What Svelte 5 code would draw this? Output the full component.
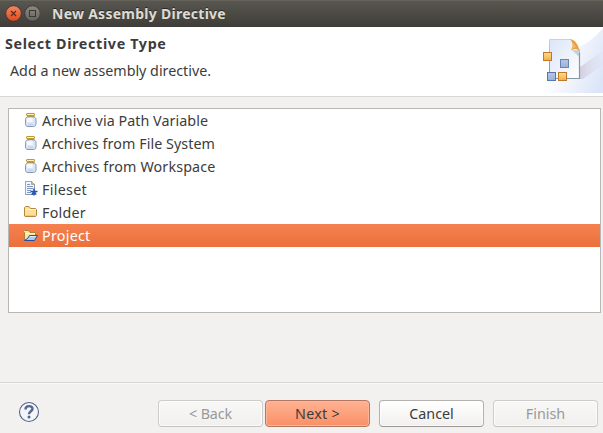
<script>
  const items = [
    { label: 'Archive via Path Variable', icon: 'jar', width: 166 },
    { label: 'Archives from File System', icon: 'jar', width: 173 },
    { label: 'Archives from Workspace', icon: 'jar', width: 173.5 },
    { label: 'Fileset', icon: 'file', width: 45 },
    { label: 'Folder', icon: 'folder', width: 44 },
    { label: 'Project', icon: 'project', width: 48.5 }
  ];
  const buttons = [
    { label: '< Back', kind: 'disabled', width: 43 },
    { label: 'Next >', kind: 'primary', width: 45 },
    { label: 'Cancel', kind: 'normal', width: 44.5 },
    { label: 'Finish', kind: 'disabled', width: 39.5 }
  ];
  let selected = $state(5);

  // Spread the tracking so that a label occupies its intended width.
  function fit(node, width) {
    const natural = node.getBoundingClientRect().width;
    const step = (width - natural) / node.textContent.length;
    node.style.letterSpacing = `${step}px`;
  }
</script>

<div class="dialog">
  <header class="titlebar">
    <svg class="controls" width="40" height="27" viewBox="0 0 40 27">
      <defs>
        <linearGradient id="close" x1="0" y1="0" x2="0" y2="1"><stop offset="0" stop-color="#f58763" /><stop offset="1" stop-color="#df4b1b" /></linearGradient>
        <linearGradient id="max" x1="0" y1="0" x2="0" y2="1"><stop offset="0" stop-color="#8b8982" /><stop offset="1" stop-color="#65635d" /></linearGradient>
      </defs>
      <circle cx="13.5" cy="13.5" r="7.8" fill="url(#close)" stroke="#34322d" stroke-width=".8" />
      <path d="M11 11l5 5M16 11l-5 5" stroke="#5a2a1a" stroke-width="1.1" />
      <circle cx="32.5" cy="13.5" r="7.8" fill="url(#max)" stroke="#34322d" stroke-width=".8" />
      <rect x="29.5" y="10.5" width="6" height="6" fill="none" stroke="#3b3934" />
    </svg>
    <span class="caption"><span use:fit={174}>New Assembly Directive</span></span>
  </header>

  <section class="banner">
    <div class="heading">
      <h1><span use:fit={161.5}>Select Directive Type</span></h1>
      <p><span use:fit={201}>Add a new assembly directive.</span></p>
    </div>
    <svg class="art" width="80" height="66" viewBox="523 27 80 66">
      <defs>
        <linearGradient id="sweep" gradientUnits="userSpaceOnUse" x1="552" y1="62" x2="603" y2="80"><stop offset="0" stop-color="#fff" /><stop offset="0.5" stop-color="#eef2fc" /><stop offset="1" stop-color="#dbe4f8" /></linearGradient>
        <linearGradient id="fade" x1="0" y1="0" x2="1" y2="0"><stop offset="0" stop-color="#c5bfd4" stop-opacity=".75" /><stop offset="1" stop-color="#d8d8eb" stop-opacity=".1" /></linearGradient>
        <linearGradient id="page" x1="0" y1="0" x2="1" y2="1"><stop offset="0" stop-color="#dce6f7" /><stop offset="0.6" stop-color="#f0f4fc" /><stop offset="1" stop-color="#fff" /></linearGradient>
        <linearGradient id="edge" x1="0" y1="0" x2="0" y2="1"><stop offset="0" stop-color="#d8d2bc" /><stop offset="1" stop-color="#6e8a99" /></linearGradient>
        <linearGradient id="gold" x1="0" y1="0" x2="0" y2="1"><stop offset="0" stop-color="#ffdc96" /><stop offset="1" stop-color="#f5ac40" /></linearGradient>
        <linearGradient id="steel" x1="0" y1="0" x2="0" y2="1"><stop offset="0" stop-color="#b7c6e0" /><stop offset="1" stop-color="#9bb1d5" /></linearGradient>
      </defs>
      <path d="M603 28C594 38 588 43 579 47V79H549L536 93H603Z" fill="url(#sweep)" />
      <path d="M580 67L603 51V65L583 79H578Z" fill="url(#fade)" />
      <path d="M549.5 39.5H571L579.5 50V78.5H549.5Z" fill="url(#page)" stroke="url(#edge)" />
      <path d="M550 78.5H579.5V53" fill="none" stroke="#8199a5" stroke-width="1.2" />
      <path d="M572 50L579 50V57Z" fill="#c9cfda" />
      <path d="M570 39C575 40 578 44 579.5 50.5C576 48.5 574 48.5 571 50.5C573.5 46 573 42 570 39Z" fill="#e9a13e" />
      <path d="M573 43L576 47L572.5 48.5Z" fill="#f5bd66" />
      <rect x="543.5" y="52.5" width="8" height="8" fill="url(#gold)" stroke="#bd792c" />
      <rect x="560.5" y="59.5" width="8" height="8" fill="url(#steel)" stroke="#6584b8" />
      <rect x="547.5" y="72.5" width="8" height="8" fill="url(#steel)" stroke="#5576b4" />
      <rect x="558.5" y="72.5" width="8" height="8" fill="url(#gold)" stroke="#bd792c" />
    </svg>
  </section>

  <main>
    <ul>
      {#each items as item, i}
        <li class:selected={i === selected} onclick={() => (selected = i)} role="presentation">
          <svg width="16" height="16" viewBox="0 0 16 16">
            {#if item.icon === 'jar'}
              <path d="M4.5 5C3.2 5.4 2.5 6.2 2.5 7.5V11.8C2.5 13.5 3.3 14.5 5 14.5H10.5C12 14.5 13 13.5 13 11.8V7.500C13 6.200 12.300 5.400 11 5Z" fill="#dce7f6" stroke="#8598b2" />
              <path d="M4 7.5Q4 5.500 6 5.500H9.500V10H4Z" fill="#fff" opacity=".75" />
              <path d="M5 12.500H10.500" stroke="#c3d6ee" stroke-width="2" />
              <rect x="3.500" y="1.500" width="8" height="2" rx=".5" fill="#fff1bd" stroke="#c09a2c" />
              <path d="M4 4.500H11.500" stroke="#b19650" />
            {:else if item.icon === 'file'}
              <path d="M2.500 .5H8.500L11.500 3.500V13.500H2.500Z" fill="#f2f6fc" stroke="#8796ae" />
              <path d="M2.500 13.500V.5H8" fill="none" stroke="#b5a779" />
              <path d="M8.500 .5V3.500H11.500Z" fill="#dfc584" stroke="#9b9476" stroke-width=".7" />
              <path d="M4 3.500H7M4 5.500H10M4 7.500H10M4 9.500H8M4 11.500H8" stroke="#7f97c2" />
              <path d="M11 7.500V14.500M7.500 10.500H14.500M8.800 13.700L11 10.500L13.200 13.700" fill="none" stroke="#2854b0" stroke-width="1.500" />
            {:else if item.icon === 'folder'}
              <path d="M1.500 12V3.500L2.500 2.500H6L7.500 4.500H12.500L13.500 5.500V11.500L12.500 12.500H2Z" fill="#fae09a" stroke="#b88739" />
              <path d="M2.500 5.500H12.500" stroke="#fff6cd" />
              <path d="M2.500 11.500H12.500" stroke="#edc974" />
            {:else}
              <path d="M1.500 13V5.500L.5 4.500L1.500 3.500H5.500L7 5.500H12.500V8" fill="#fbe5a5" stroke="#ae8335" />
              <path d="M2.500 6.500H12" stroke="#fff6cf" />
              <path d="M1.500 13.500L4.500 11.500L6.500 8.500H14.500L11.500 13.500Z" fill="#a9caf1" stroke="#294d99" />
              <path d="M7 9.500H13" stroke="#e0effd" />
            {/if}
          </svg>
          <span use:fit={item.width}>{item.label}</span>
        </li>
      {/each}
    </ul>
  </main>

  <footer>
    <svg class="help" width="22" height="22" viewBox="0 0 22 22">
      <circle cx="11" cy="11" r="9.5" fill="#f4f6fa" stroke="#51658e" stroke-width="1.1" />
      <path d="M7.5 8.4C7.5 4 14.6 4.200 14.500 7.900C14.400 10.200 11 10.300 11 13.200" fill="none" stroke="#536790" stroke-width="2.400" />
      <circle cx="11" cy="16" r="1.500" fill="#536790" />
    </svg>
    <div class="actions">
      {#each buttons as button}
        <button class={button.kind} disabled={button.kind === 'disabled'}><span use:fit={button.width}>{button.label}</span></button>
      {/each}
    </div>
  </footer>
</div>

<style>
  .dialog {
    width: 603px;
    height: 433px;
    display: flex;
    flex-direction: column;
    overflow: hidden;
    box-sizing: border-box;
    background: #f2f1f0;
    color: #3c3c3c;
    font: 14.3px/23px "Noto Sans", "Open Sans", sans-serif;
    white-space: nowrap;
  }
  .titlebar {
    flex: 0 0 27px;
    display: flex;
    background: linear-gradient(#595750, #3e3d39);
    box-shadow: inset 0 1px #65625a;
    color: #dfdbd2;
    font-size: 14px;
    font-weight: 700;
    line-height: 27px;
  }
  .caption { margin-left: 12px; text-shadow: 0 -1px #292824; }
  .banner {
    flex: 0 0 69px;
    display: flex;
    justify-content: space-between;
    background: #fff;
    border-bottom: 1px solid #d9d7d5;
  }
  .heading { padding: 5px 0 0 5px; }
  h1 { margin: 0; font-size: 14.3px; line-height: 24px; }
  p { margin: 3px 0 0 5px; line-height: 24px; }
  main { flex: 0 0 285px; padding: 11px 2px 0 8px; box-sizing: border-box; }
  ul {
    height: 205px;
    box-sizing: border-box;
    margin: 0;
    padding: 0;
    border: 1px solid #b9b7b5;
    background: #fff;
    list-style: none;
  }
  li { display: flex; align-items: center; height: 23px; padding-left: 14px; gap: 3px; }
  li svg { margin-bottom: 1px; }
  .selected { color: #fff; background: linear-gradient(#f58150, #eb703b); }
  footer {
    flex: 1;
    display: flex;
    justify-content: space-between;
    box-sizing: border-box;
    padding: 17px 5px 0 18px;
    border-top: 1px solid #d9d7d5;
    box-shadow: inset 0 1px #faf9f9;
  }
  .help { margin-top: 1px; }
  .actions { display: flex; gap: 9px; }
  .actions button:nth-child(2) { margin-left: -7px; }
  button {
    display: flex;
    align-items: center;
    justify-content: center;
    width: 105px;
    height: 27px;
    padding: 0;
    box-sizing: border-box;
    border: 1px solid #b3b0ad;
    border-bottom-color: #999693;
    border-radius: 4px;
    background: linear-gradient(#fff, #f1f0ef);
    box-shadow: inset 0 0 0 1px rgba(255, 255, 255, .7);
    color: #3c3c3c;
    font: inherit;
  }
  .primary { border-color: #b37660; background: linear-gradient(#ffb293, #f99066); box-shadow: inset 0 0 0 1px #ffb698; }
  .disabled { border-color: #cfcdcb; border-bottom-color: #c4c2c0; background: linear-gradient(#f8f8f7, #f1f0ef); color: #999; }
</style>
